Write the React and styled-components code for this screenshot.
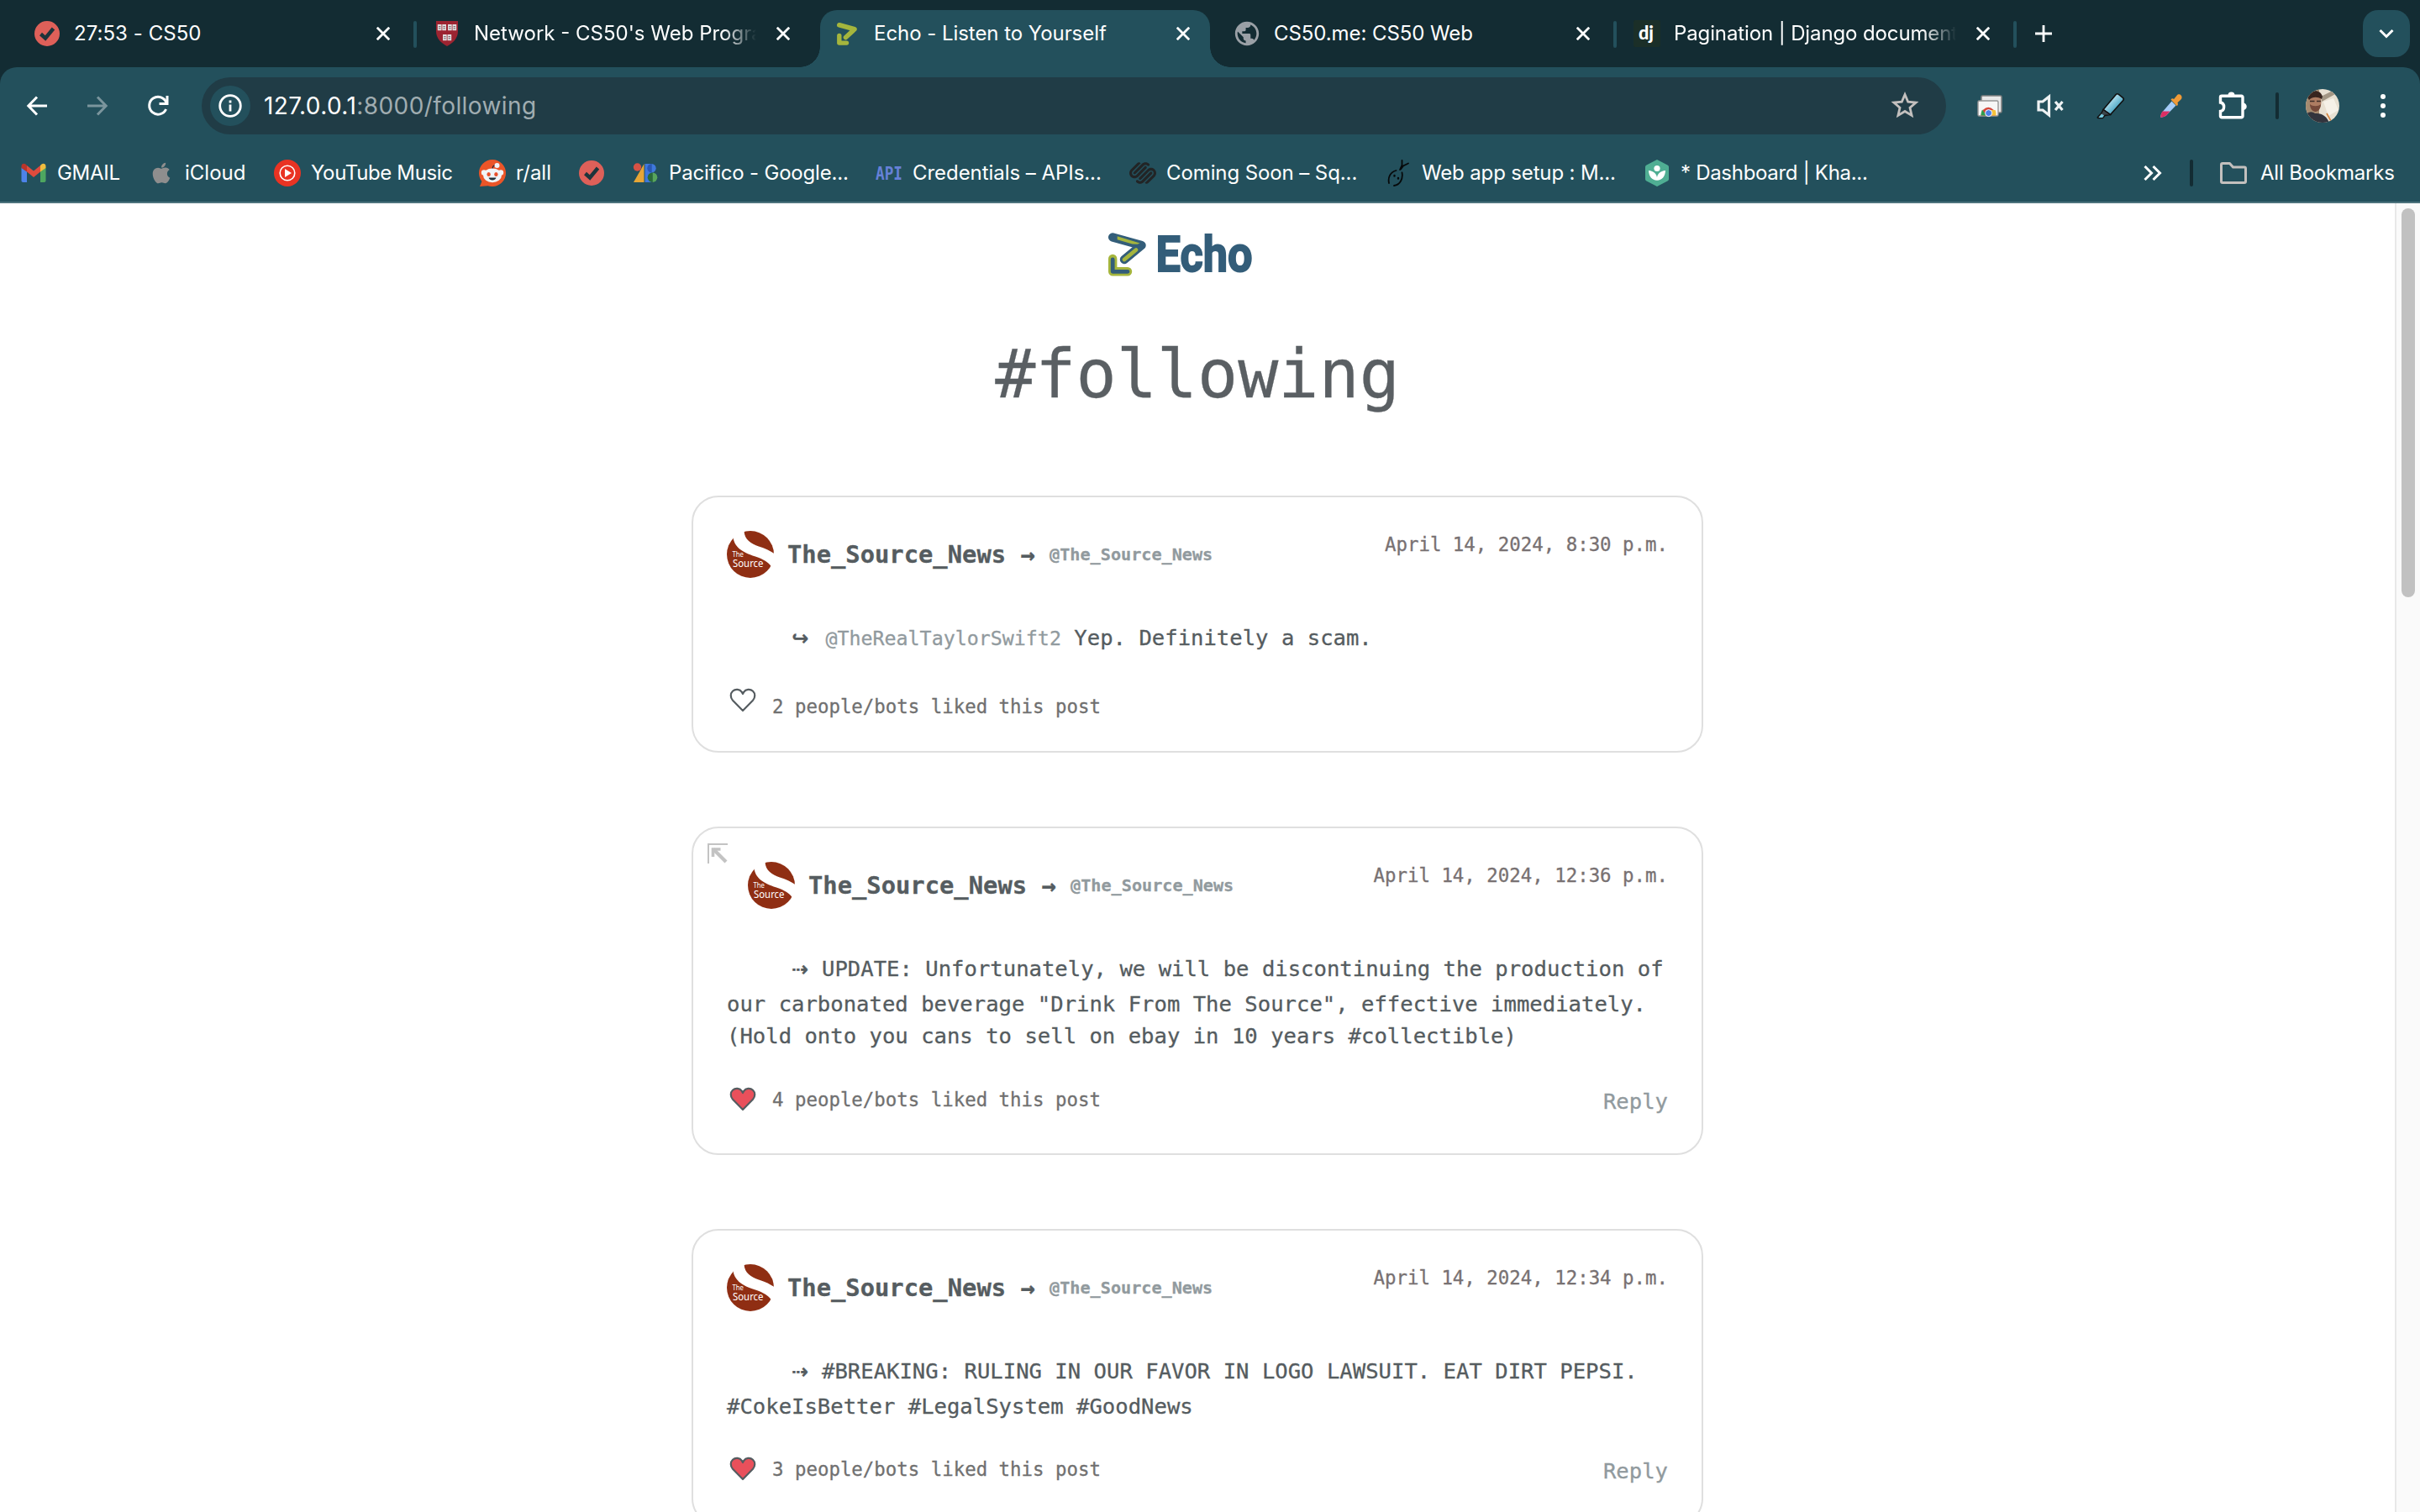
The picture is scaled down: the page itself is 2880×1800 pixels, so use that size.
import React from "react";
import styled, { createGlobalStyle } from "styled-components";
import { FaApple } from "react-icons/fa";
import { SiSquarespace } from "react-icons/si";
import { MdPublic } from "react-icons/md";

const c = {
  strip: "#132c33",
  bar: "#23505c",
  field: "#203c46",
  line: "#4d737d",
  ink: "#555c60",
  muted: "#919a9e",
  red: "#8f2e13",
  blue: "#335d79",
  green: "#a5b53d",
};

const mono = `"DejaVu Sans Mono", "Liberation Mono", monospace`;

const Global = createGlobalStyle`
  * { box-sizing: border-box; }
  html, body { margin: 0; padding: 0; background: #fff; overflow: hidden; }
  svg { display: block; flex: none; }
`;

const Window = styled.div`
  width: 2880px;
  height: 1800px;
  display: flex;
  flex-direction: column;
  overflow: hidden;
  font-family: Inter, "Liberation Sans", sans-serif;
  color: #fff;
`;

/* ---------- tab strip ---------- */

const TabStrip = styled.div`
  height: 80px;
  flex: none;
  display: flex;
  align-items: flex-end;
  padding: 0 12px 0 24px;
  background: ${c.strip};
`;

const Tab = styled.div`
  position: relative;
  width: 464px;
  height: 68px;
  padding: 0 24px 12px 16px;
  display: flex;
  align-items: center;
  border-radius: 20px 20px 0 0;
  background: ${(p) => (p.$active ? c.bar : "transparent")};
  ${(p) =>
    p.$active &&
    `
    &::before, &::after {
      content: "";
      position: absolute;
      bottom: 0;
      width: 24px;
      height: 24px;
    }
    &::before { left: -24px; background: radial-gradient(circle at 0 0, transparent 23.5px, ${c.bar} 24px); }
    &::after { right: -24px; background: radial-gradient(circle at 100% 0, transparent 23.5px, ${c.bar} 24px); }
  `}
`;

const TabTitle = styled.span`
  flex: 1;
  margin: 0 24px 0 16px;
  overflow: hidden;
  white-space: nowrap;
  font-size: 24px;
  line-height: 32px;
  letter-spacing: ${(p) => p.$track || 0}px;
  ${(p) => p.$fade && `mask-image: linear-gradient(90deg, #000 296px, transparent 336px);`}
`;

const TabGap = styled.div`
  width: 12px;
  height: 68px;
  padding-bottom: 11px;
  display: flex;
  align-items: center;
  justify-content: center;
  &::before {
    content: "";
    width: 4px;
    height: 32px;
    border-radius: 2px;
    background: ${(p) => (p.$visible ? c.bar : "transparent")};
  }
`;

const NewTab = styled.div`
  height: 68px;
  padding: 0 0 12px 16px;
  display: flex;
  align-items: center;
  flex: 1;
`;

const TabSearch = styled.div`
  width: 56px;
  height: 56px;
  margin-bottom: 12px;
  border-radius: 18px;
  background: ${c.bar};
  display: flex;
  align-items: center;
  justify-content: center;
`;

/* ---------- toolbar ---------- */

const Chrome = styled.div`
  flex: none;
  background: ${c.strip};
`;

const ChromeBody = styled.div`
  height: 162px;
  background: ${c.bar};
  border-radius: 20px 20px 0 0;
  border-bottom: 2px solid ${c.line};
  display: flex;
  flex-direction: column;
`;

const Toolbar = styled.div`
  height: 92px;
  padding: 0 40px 0 28px;
  display: flex;
  align-items: center;
`;

const NavButtons = styled.div`
  display: flex;
  width: 212px;
  gap: 40px;
`;

const AddressBar = styled.div`
  width: 2076px;
  height: 68px;
  padding: 0 31px 0 10px;
  border-radius: 34px;
  background: ${c.field};
  display: flex;
  align-items: center;
`;

const InfoBadge = styled.div`
  width: 48px;
  height: 48px;
  border-radius: 50%;
  background: ${c.bar};
  display: flex;
  align-items: center;
  justify-content: center;
`;

const Url = styled.div`
  flex: 1;
  margin-left: 16px;
  font-size: 28px;
  line-height: 36px;
  letter-spacing: 0.42px;
  color: #a0adb1;
  b { font-weight: 400; color: #fff; }
`;

const Extensions = styled.div`
  display: flex;
  align-items: center;
  gap: 36px;
  margin-left: 34px;
`;

const Divider = styled.div`
  width: 4px;
  height: 32px;
  border-radius: 2px;
  background: ${c.strip};
  margin: ${(p) => p.$margin || 0};
`;

/* ---------- bookmarks ---------- */

const Bookmarks = styled.div`
  height: 68px;
  padding: 0 24px;
  display: flex;
  align-items: center;
`;

const Bookmark = styled.div`
  width: ${(p) => p.$width}px;
  display: flex;
  align-items: center;
  gap: ${(p) => p.$gap || 12}px;
  flex: none;
`;

const IconCell = styled.span`
  width: ${(p) => p.$width || 32}px;
  display: flex;
  justify-content: center;
`;

const BookmarkText = styled.span`
  font-size: 24px;
  line-height: 32px;
  white-space: nowrap;
  letter-spacing: ${(p) => p.$track || 0}px;
`;

const Spacer = styled.div`
  flex: 1;
`;

/* ---------- page ---------- */

const Viewport = styled.div`
  flex: 1;
  min-height: 0;
  display: flex;
  background: #fff;
`;

const Page = styled.main`
  flex: 1;
  min-width: 0;
  overflow: hidden;
  display: flex;
  flex-direction: column;
  align-items: center;
  font-family: ${mono};
  color: ${c.ink};
  -webkit-text-stroke: 0.3px;
`;

const Scrollbar = styled.div`
  width: 30px;
  padding: 6px 6px 0 6px;
  border-left: 2px solid #e8e8e8;
  background: #fafafa;
`;

const Thumb = styled.div`
  width: 16px;
  height: 463px;
  border-radius: 8px;
  background: #c1c1c1;
`;

const Brand = styled.div`
  width: 214px;
  height: 60px;
  margin-top: 30px;
  display: flex;
  align-items: flex-start;
`;

const Heading = styled.h1`
  margin: 66px 0 0;
  height: 96px;
  font-size: 80px;
  line-height: 96px;
  font-weight: 400;
  color: #5a5f63;
`;

const Feed = styled.div`
  margin-top: 96px;
  display: flex;
  flex-direction: column;
  gap: 88px;
`;

const Card = styled.article`
  width: 1204px;
  height: ${(p) => p.$height}px;
  flex: none;
  padding: 40px;
  border: 2px solid #dfdfdf;
  border-radius: 32px;
`;

const CardHeader = styled.header`
  height: 56px;
  display: flex;
  align-items: center;
`;

const PinCorner = styled.div`
  width: 23px;
  margin: -22px 25px 0 -23px;
  align-self: flex-start;
`;

const Author = styled.div`
  flex: 1;
  margin-left: 16px;
  display: flex;
  align-items: center;
  white-space: pre;
  font-size: 28.8px;
  font-weight: 700;
`;

const Handle = styled.span`
  font-size: 20.16px;
  color: ${c.muted};
`;

const Stamp = styled.time`
  align-self: flex-start;
  font-size: 22.4px;
  line-height: 32px;
  color: #787172;
`;

const Body = styled.p`
  margin: 52px 0 0;
  font-size: 25.6px;
  line-height: 38.4px;
  text-indent: 77.2px;
`;

const Lead = styled.span`
  display: inline-block;
  width: ${(p) => p.$width}px;
  padding-bottom: 6px;
  text-indent: 0;
  font-family: "DejaVu Sans", sans-serif;
  font-size: 24px;
  font-weight: 700;
  line-height: 32px;
`;

const Mention = styled.span`
  font-size: 23.3px;
  color: ${c.muted};
`;

const CardFooter = styled.footer`
  display: flex;
  align-items: flex-start;
  padding-top: ${(p) => p.$top}px;
`;

const HeartBox = styled.div`
  width: 54px;
  padding-left: 3px;
  margin-top: 2px;
`;

const Likes = styled.div`
  flex: 1;
  margin-top: ${(p) => p.$drop}px;
  font-size: 22.4px;
  line-height: 32px;
  color: #707070;
`;

const Reply = styled.a`
  margin-top: 3px;
  font-size: 25.6px;
  line-height: 32px;
  color: ${c.muted};
`;

/* ---------- drawings ---------- */

const Close = () => (
  <svg width="16" height="16" viewBox="0 0 16 16" stroke="#fff" strokeWidth="2.8">
    <path d="M.8.8 15.2 15.2M15.2.8.8 15.2" />
  </svg>
);

const CheckIcon = () => (
  <svg width="32" height="32" viewBox="0 0 32 32">
    <circle cx="16" cy="16" r="15" fill="#de6059" />
    <path d="M8.5 16.5 14 21.5 23.5 10" fill="none" stroke="#1d343b" strokeWidth="4.4" />
  </svg>
);

const Shield = () => (
  <svg width="32" height="32" viewBox="0 0 32 32">
    <path d="M3 1h26v12c0 9-6 14-13 18C9 27 3 22 3 13z" fill="#9c2431" />
    {[[4.8, 5], [17, 5], [11, 17]].map(([x, y]) => (
      <g key={x} fill="#e2dcdd">
        <path d={`M${x} ${y}h4.7v7.2h-4.7zM${x + 5.5} ${y}h4.7v7.2h-4.7z`} />
        <path d={`M${x + 1.2} ${y + 2.6}h2.4M${x + 6.6} ${y + 2.6}h2.4M${x + 1.2} ${y + 4.8}h2.4M${x + 6.6} ${y + 4.8}h2.4`} stroke="#75666a" strokeWidth="1" />
      </g>
    ))}
  </svg>
);

const EchoFavicon = () => (
  <svg width="32" height="32" viewBox="0 0 32 32" fill="none" stroke={c.green} strokeLinecap="round" strokeLinejoin="round">
    <path d="M6.8 5.8 25 10.8 14.5 20.5" strokeWidth="5.6" />
    <path d="M6.8 18.5v8.6h8.7" strokeWidth="5.4" />
  </svg>
);

const Globe = () => (
  <IconCell>
    <MdPublic size={34} color="#9aa0a6" />
  </IconCell>
);

const Star = () => (
  <svg width="36" height="36" viewBox="0 0 36 36">
    <path d="M18 4.500l3.700 8.700 9.400.8-7.100 6.200 2.100 9.200-8.100-4.900-8.100 4.900 2.100-9.200L4.900 14l9.400-.8z" fill="none" stroke="#c3c0be" strokeWidth="2.800" />
  </svg>
);

const Django = () => (
  <svg width="32" height="32" viewBox="0 0 32 32">
    <rect width="32" height="32" rx="2" fill="#1b2f28" />
    <text x="6" y="23" fontFamily="Lato, sans-serif" fontWeight="900" fontSize="22" textLength="18" lengthAdjust="spacingAndGlyphs" fill="#fff">dj</text>
  </svg>
);

const Arrow = ({ flip, color }) => (
  <svg width="32" height="32" viewBox="0 0 32 32" fill="none" stroke={color} strokeWidth="3" transform={flip ? "scale(-1 1)" : undefined}>
    <path d="M28 16H6.5M16 5.5 5.8 16 16 26.5" />
  </svg>
);

const Reload = () => (
  <svg width="32" height="32" viewBox="0 0 32 32" fill="none" stroke="#fff" strokeWidth="3">
    <path d="M25.6 20A10.4 10.4 0 1 1 26 12.5" />
    <path d="M27 4v9.5h-9.5" />
  </svg>
);

const Info = () => (
  <svg width="28" height="28" viewBox="0 0 28 28" fill="none" stroke="#fff" strokeWidth="2.8">
    <circle cx="14" cy="14" r="12.3" />
    <path d="M14 12.5V20.5M14 7.6v2.8" />
  </svg>
);

const Windows = () => (
  <svg width="36" height="36" viewBox="0 0 36 36">
    <rect x="8" y="6" width="24" height="20" rx="1.5" fill="#e9e9e9" stroke="#828282" strokeWidth="1.6" />
    <rect x="4" y="12" width="24" height="18" rx="1.5" fill="#f6f6f6" stroke="#969696" strokeWidth="1.4" />
    <path d="M7.5 29.5a8.800 11 0 0 1 17.5 0z" fill="#d5473a" />
    <path d="M7.5 29.5c0-3 .5-5 1.6-7L14 29.5z" fill="#2f9e50" />
    <path d="M17 23h7.5c.9 2 1.100 4 1 6.5H17z" fill="#f5c33b" />
    <circle cx="16.600" cy="26.600" r="4" fill="#4b7fea" stroke="#fff" strokeWidth="1" />
  </svg>
);

const Mute = () => (
  <svg width="36" height="36" viewBox="0 0 36 36" fill="none" stroke="#eef2f3" strokeWidth="3.200">
    <path d="M4 13h5l7.500-6v22L9 23H4z" />
    <path d="M24 13l8.500 10M32.500 13L24 23" />
  </svg>
);

const Highlighter = () => (
  <svg width="36" height="36" viewBox="0 0 36 36">
    <defs>
      <linearGradient id="hl" x1="0" y1="0" x2="1" y2="1">
        <stop offset=".2" stopColor="#d4f1fa" />
        <stop offset=".75" stopColor="#3a9cbd" />
      </linearGradient>
    </defs>
    <path d="M9 22.5 24 4.800c1-1.200 2.300-1.300 3.400-.4l5 4c1.200 1 1.200 2 .3 3.200L17.500 28.500z" fill="url(#hl)" stroke="#111" strokeWidth="1.600" />
    <path d="M9 22.500l8.500 6-6.500 1-2.500 3H3c-.8 0-.9-.6-.6-1.200L6.700 27z" fill="#3a454b" stroke="#111" strokeWidth="1.400" />
    <path d="M3.500 32l3.500-4.500 3 2-1.800 2.500z" fill="#74c8de" />
  </svg>
);

const Dropper = () => (
  <svg width="36" height="36" viewBox="0 0 36 36">
    <path d="M18.500 12.500l5 5L12 29.500c-1.500 1.300-3.500 1.800-5.500 2.200-1 .2-1.500-.4-1.300-1.300.5-2 1-4 2.500-5.500z" fill="#a4cbf7" />
    <path d="M7.500 24.500h9L12 29.500c-1.500 1.300-3.500 1.800-5.500 2.200-1 .2-1.500-.4-1.300-1.300.5-2 1-4 2.300-5.900z" fill="#dc2e63" />
    <path d="M17.500 10.500c1-1.500 2.400-1.500 3.600-.6l3.300-4c2-2.300 4-1.700 5.200-.4s1.500 3.500-.4 5.300l-3.800 3.400c1 1.600.6 2.600-.7 4.100z" fill="#f09a37" />
  </svg>
);

const Puzzle = () => (
  <svg width="36" height="36" viewBox="0 0 36 36">
    <path d="M13.500 5.500a4 4 0 0 1 8 0zM31.500 14.500a4.200 4.200 0 0 1 0 8.500z" fill="#fff" />
    <path d="M6 6.200h23.500a1.500 1.500 0 0 1 1.500 1.500v22.500a1.500 1.500 0 0 1-1.500 1.500H6a1.500 1.500 0 0 1-1.500-1.500v-5.700c5.500-1 5.500-9.500 0-10.500V7.700A1.500 1.500 0 0 1 6 6.200z" fill="none" stroke="#fff" strokeWidth="3.400" />
  </svg>
);

const Portrait = () => (
  <svg width="40" height="40" viewBox="0 0 40 40">
    <defs>
      <clipPath id="face"><circle cx="20" cy="20" r="20" /></clipPath>
    </defs>
    <g clipPath="url(#face)">
      <path d="M0 0h40v40H0z" fill="#e8e0d2" />
      <path d="M0 0h16v40H0z" fill="#a58b70" />
      <path d="M18 9l16-8 3 4-18 10z" fill="#a39684" />
      <path d="M21 15l12-4 6 14-12 7z" fill="#f6f1e8" />
      <ellipse cx="11.500" cy="15.500" rx="7" ry="10.500" fill="#ad7c62" />
      <path d="M2 10C4 1 17-1 20 9l-1 3C14 9 8 9 4 13z" fill="#38251f" />
      <path d="M5 18c3 3 10 3 13 0 0 5-3 9-6.500 9S5 23 5 18z" fill="#75493a" />
      <path d="M5 14.500h5.500M13 14.500h5" stroke="#3c2c28" strokeWidth="1.300" />
      <path d="M0 30c5-4 8-3 11-1 6 0 13 1 17 11H0z" fill="#32343d" />
      <path d="M25 29l5 9" stroke="#d5843f" strokeWidth="1.600" />
    </g>
  </svg>
);

const Dots = () => (
  <svg width="8" height="32" viewBox="0 0 8 32" fill="#fff">
    <circle cx="4" cy="5" r="3" /><circle cx="4" cy="16" r="3" /><circle cx="4" cy="27" r="3" />
  </svg>
);

const Gmail = () => (
  <svg width="32" height="32" viewBox="0 0 32 32">
    <path d="M1.500 9.500V25c0 1.200.8 2 2 2H8V14z" fill="#4d83ea" />
    <path d="M30.500 9.500V25c0 1.200-.8 2-2 2H24V14z" fill="#4ea660" />
    <path d="M8 7l8 6.500L24 7v7.500L16 21l-8-6.500z" fill="#df4b3d" />
    <path d="M1.500 10V8c0-3 3-4 5-2.500L8 7v7.500z" fill="#b8352a" />
    <path d="M30.500 10V8c0-3-3-4-5-2.500L24 7v7.500z" fill="#efbd3f" />
  </svg>
);

const YouTubeMusic = () => (
  <svg width="32" height="32" viewBox="0 0 32 32">
    <circle cx="16" cy="16" r="16" fill="#e93323" />
    <circle cx="16" cy="16" r="8.800" fill="none" stroke="#fff" strokeWidth="1.600" />
    <path d="M13 11l8 5-8 5z" fill="#fff" />
  </svg>
);

const Reddit = () => (
  <svg width="32" height="32" viewBox="0 0 32 32">
    <circle cx="16" cy="16" r="16" fill="#eb5528" />
    <path d="M1 32l4-10 8 9z" fill="#eb5528" />
    <path d="M16 11c.4-3 1.400-4.500 4-4" fill="none" stroke="#223" strokeWidth="1.200" />
    <circle cx="21.500" cy="7" r="3" fill="#f1f4f6" />
    <circle cx="6" cy="15.500" r="3.200" fill="#f1f4f6" />
    <circle cx="26" cy="15.500" r="3.200" fill="#f1f4f6" />
    <ellipse cx="16" cy="18.800" rx="11" ry="8.400" fill="#f1f4f6" />
    <ellipse cx="11.600" cy="17.500" rx="2.200" ry="2.600" fill="#e8502a" />
    <ellipse cx="20.400" cy="17.500" rx="2.200" ry="2.600" fill="#e8502a" />
    <path d="M11.500 21.500h9c-1 4-8 4-9 0z" fill="#20323a" />
  </svg>
);

const GoogleFonts = () => (
  <svg width="32" height="32" viewBox="0 0 32 32">
    <path d="M14.500 5v22H2z" fill="#e7a636" />
    <circle cx="6.500" cy="9" r="4.700" fill="#d65245" />
    <path d="M15.500 5h8v22h-8z" fill="#3f78dd" />
    <path d="M23.500 5a5.200 5.200 0 0 1 0 10.400z" fill="#3f78dd" />
    <path d="M23.500 5v10.400a5.200 5.200 0 0 1 0-10.400z" fill="#2a57b5" />
    <path d="M24.500 15.400a5.800 5.800 0 0 1 0 11.600z" fill="#58a55c" />
    <path d="M24.500 15.400V27a5.800 5.800 0 0 1 0-11.600z" fill="#2a6b38" />
  </svg>
);

const ApiMark = () => (
  <svg width="32" height="32" viewBox="0 0 32 32">
    <text x="0" y="24" fontFamily="DejaVu Sans Mono, monospace" fontWeight="700" fontSize="22" textLength="32" lengthAdjust="spacingAndGlyphs" fill="#6681d8">API</text>
  </svg>
);

const Gazelle = () => (
  <svg width="32" height="32" viewBox="0 0 32 32" fill="none" stroke="#06090a" strokeWidth="1.800" strokeLinecap="round">
    <path d="M20.500 1v5.500L18 12M28 4.500l-6 3-3 4" />
    <path d="M13.500 13C6.500 15 3.500 21 5 28M20.500 15.500C22 23 18 30 11 31" />
    <path d="M11.500 19v.5M16 22v.5" strokeWidth="2.400" />
  </svg>
);

const Khan = () => (
  <svg width="32" height="32" viewBox="0 0 32 32">
    <path d="M16 0l12.500 6.500c1 .6 1.500 1.300 1.500 2.500v14c0 1.200-.5 2-1.500 2.500L16 32 3.500 25.500C2.500 25 2 24.200 2 23V9c0-1.200.5-1.900 1.500-2.500z" fill="#4fae93" />
    <circle cx="16" cy="10.500" r="3.600" fill="#fff" />
    <path d="M6 13c6 .5 9.500 4 10 8.500.5-4.500 4-8 10-8.500-.2 7-4 11.500-10 11.800C10 24.500 6.200 20 6 13z" fill="#fff" />
  </svg>
);

const Folder = () => (
  <svg width="34" height="32" viewBox="0 0 34 32" fill="none" stroke="#c3c0be" strokeWidth="3" strokeLinejoin="round">
    <path d="M4 4.500h8.500l4 4.500H30c1 0 1.500.5 1.500 1.500V26c0 1-.5 1.500-1.500 1.500H4c-1 0-1.500-.5-1.500-1.500V6c0-1 .5-1.500 1.500-1.500z" />
  </svg>
);

const EchoLogo = () => (
  <svg width="214" height="60" viewBox="0 0 214 60" fill="none" strokeLinecap="round" strokeLinejoin="round">
    <path d="M6.200 10.500 40.500 20 20 37" stroke={c.blue} strokeWidth="10.400" />
    <path d="M11.700 9.200 38.500 17.600 35.500 18.800 29.500 18.400 11.700 13.200z" fill={c.green} />
    <path d="M34 25.500 20 37" stroke={c.green} strokeWidth="4.800" />
    <path d="M6.200 36v15.300H24" stroke={c.green} strokeWidth="10.400" />
    <path d="M6.200 37v14.300H24" stroke={c.blue} strokeWidth="4.800" />
    <text x="57.500" y="51" fill={c.blue} stroke={c.blue} strokeWidth="1.800" strokeLinejoin="miter" fontFamily="Roboto, sans-serif" fontWeight="700" fontSize="59" textLength="115" lengthAdjust="spacingAndGlyphs">Echo</text>
  </svg>
);

const SourceAvatar = () => (
  <svg width="56" height="56" viewBox="0 0 56 56">
    <circle cx="28" cy="28" r="28" fill={c.red} />
    <path d="M20.500 0C21 11 29 15 38 18.500 46 21 52 24 57 27.500V36l-4 6.500C49 37 44 34 34 30.500 16 25 9 18 7.500 8L12 0z" fill="#fff" />
    <g fill="#fff" fontFamily="Noto Sans, sans-serif">
      <text x="6.500" y="31" fontSize="9.600" textLength="13.500" lengthAdjust="spacingAndGlyphs">The</text>
      <text x="7" y="43" fontSize="12" textLength="36.500" lengthAdjust="spacingAndGlyphs">Source</text>
    </g>
  </svg>
);

const PinArrow = () => (
  <svg width="24" height="24" viewBox="0 0 24 24" fill="none" stroke="#c3c3c3">
    <path d="M1 24V1h23" strokeWidth="2" />
    <path d="M6.500 16V7h9" strokeWidth="3.600" />
    <path d="M7 7l15 15" strokeWidth="4.200" />
  </svg>
);

const Heart = ({ filled }) => (
  <svg width="32" height="29" viewBox="0 0 32 29">
    <path d="M16 27 4 14.800C1 11.500 1 6.500 4 3.700c3.300-3 8.500-2.300 10.800 1.200L16 7l1.200-2.100C19.500 1.400 24.700.7 28 3.700c3 2.800 3 7.800 0 11.100z" fill={filled ? "#e9505b" : "none"} stroke={c.ink} strokeWidth="2.200" strokeLinejoin="round" />
  </svg>
);

/* ---------- data ---------- */

const tabs = [
  { icon: <CheckIcon />, title: "27:53 - CS50", sep: true, track: 0.05 },
  { icon: <Shield />, title: "Network - CS50's Web Programming", fade: true },
  { icon: <EchoFavicon />, title: "Echo - Listen to Yourself", active: true, track: -0.05 },
  { icon: <Globe />, title: "CS50.me: CS50 Web", sep: true, track: -0.08 },
  { icon: <Django />, title: "Pagination | Django documentation", sep: true, fade: true, track: -0.12 },
];

const bookmarks = [
  { icon: <Gmail />, text: "GMAIL", width: 152, track: -0.3 },
  { icon: <FaApple size={28} color="#8e8e8e" />, text: "iCloud", width: 150 },
  { icon: <YouTubeMusic />, text: "YouTube Music", width: 244, track: -0.35 },
  { icon: <Reddit />, text: "r/all", width: 118 },
  { icon: <CheckIcon />, width: 64 },
  { icon: <GoogleFonts />, text: "Pacifico - Google...", width: 290, track: -0.2 },
  { icon: <ApiMark />, text: "Credentials – APIs...", width: 302, track: -0.05 },
  { icon: <SiSquarespace size={32} color="#222425" />, text: "Coming Soon – Sq...", width: 304, track: -0.1 },
  { icon: <Gazelle />, text: "Web app setup : M...", width: 308, track: -0.15 },
  { icon: <Khan />, text: "* Dashboard | Kha...", width: 300, track: -0.3 },
];

const posts = [
  { height: 306, date: "April 14, 2024, 8:30 p.m.", arrow: "↪", lead: 24.8, mention: "@TheRealTaylorSwift2", text: "Yep. Definitely a scam.", likes: 2, top: 35, drop: 8 },
  { height: 391, pinned: true, date: "April 14, 2024, 12:36 p.m.", arrow: "⇢", lead: 20.4, text: 'UPDATE: Unfortunately, we will be discontinuing the production of our carbonated beverage "Drink From The Source", effective immediately. (Hold onto you cans to sell on ebay in 10 years #collectible)', likes: 4, liked: true, reply: true, top: 39, drop: 1 },
  { height: 353, date: "April 14, 2024, 12:34 p.m.", arrow: "⇢", lead: 20.4, text: "#BREAKING: RULING IN OUR FAVOR IN LOGO LAWSUIT. EAT DIRT PEPSI. #CokeIsBetter #LegalSystem #GoodNews", likes: 3, liked: true, reply: true, top: 39, drop: 0.5 },
];

const Post = ({ post }) => (
  <Card $height={post.height}>
    <CardHeader>
      {post.pinned && <PinCorner><PinArrow /></PinCorner>}
      <SourceAvatar />
      <Author>
        {"The_Source_News → "}
        <Handle>@The_Source_News</Handle>
      </Author>
      <Stamp>{post.date}</Stamp>
    </CardHeader>
    <Body>
      <Lead $width={post.lead}>{post.arrow}</Lead>{" "}
      {post.mention && <><Mention>{post.mention}</Mention>{" "}</>}
      {post.text}
    </Body>
    <CardFooter $top={post.top}>
      <HeartBox><Heart filled={post.liked} /></HeartBox>
      <Likes $drop={post.drop}>{`${post.likes} people/bots liked this post`}</Likes>
      {post.reply && <Reply>Reply</Reply>}
    </CardFooter>
  </Card>
);

export default function App() {
  return (
    <>
      <Global />
      <Window>
        <TabStrip>
          {tabs.map((t) => (
            <React.Fragment key={t.title}>
              <Tab $active={t.active}>
                {t.icon}
                <TabTitle $fade={t.fade} $track={t.track}>{t.title}</TabTitle>
                <Close />
              </Tab>
              <TabGap $visible={t.sep} />
            </React.Fragment>
          ))}
          <NewTab>
            <svg width="24" height="24" viewBox="0 0 24 24" stroke="#fff" strokeWidth="2.800">
              <path d="M12 2v20M2 12h20" />
            </svg>
          </NewTab>
          <TabSearch>
            <svg width="18" height="12" viewBox="0 0 18 12" fill="none" stroke="#fff" strokeWidth="3">
              <path d="M1.500 2 9 9.500 16.500 2" />
            </svg>
          </TabSearch>
        </TabStrip>

        <Chrome>
          <ChromeBody>
            <Toolbar>
              <NavButtons>
                <Arrow color="#fff" />
                <Arrow color="#7b959d" flip />
                <Reload />
              </NavButtons>
              <AddressBar>
                <InfoBadge><Info /></InfoBadge>
                <Url><b>127.0.0.1</b>:8000/following</Url>
                <Star />
              </AddressBar>
              <Extensions>
                <Windows />
                <Mute />
                <Highlighter />
                <Dropper />
                <Puzzle />
              </Extensions>
              <Divider $margin="0 32px 0 34px" />
              <Portrait />
              <Spacer />
              <Dots />
            </Toolbar>
            <Bookmarks>
              {bookmarks.map((b) => (
                <Bookmark key={b.width} $width={b.width}>
                  <IconCell>{b.icon}</IconCell>
                  {b.text && <BookmarkText $track={b.track}>{b.text}</BookmarkText>}
                </Bookmark>
              ))}
              <Spacer />
              <svg width="24" height="20" viewBox="0 0 24 20" fill="none" stroke="#fff" strokeWidth="3">
                <path d="M2.500 2l8 8-8 8M12.500 2l8 8-8 8" />
              </svg>
              <Divider $margin="0 31px 0 32px" />
              <Bookmark $width={215} $gap={15}>
                <Folder />
                <BookmarkText $track={-0.2}>All Bookmarks</BookmarkText>
              </Bookmark>
            </Bookmarks>
          </ChromeBody>
        </Chrome>

        <Viewport>
          <Page>
            <Brand><EchoLogo /></Brand>
            <Heading>#following</Heading>
            <Feed>
              {posts.map((p) => <Post key={p.date} post={p} />)}
            </Feed>
          </Page>
          <Scrollbar><Thumb /></Scrollbar>
        </Viewport>
      </Window>
    </>
  );
}
